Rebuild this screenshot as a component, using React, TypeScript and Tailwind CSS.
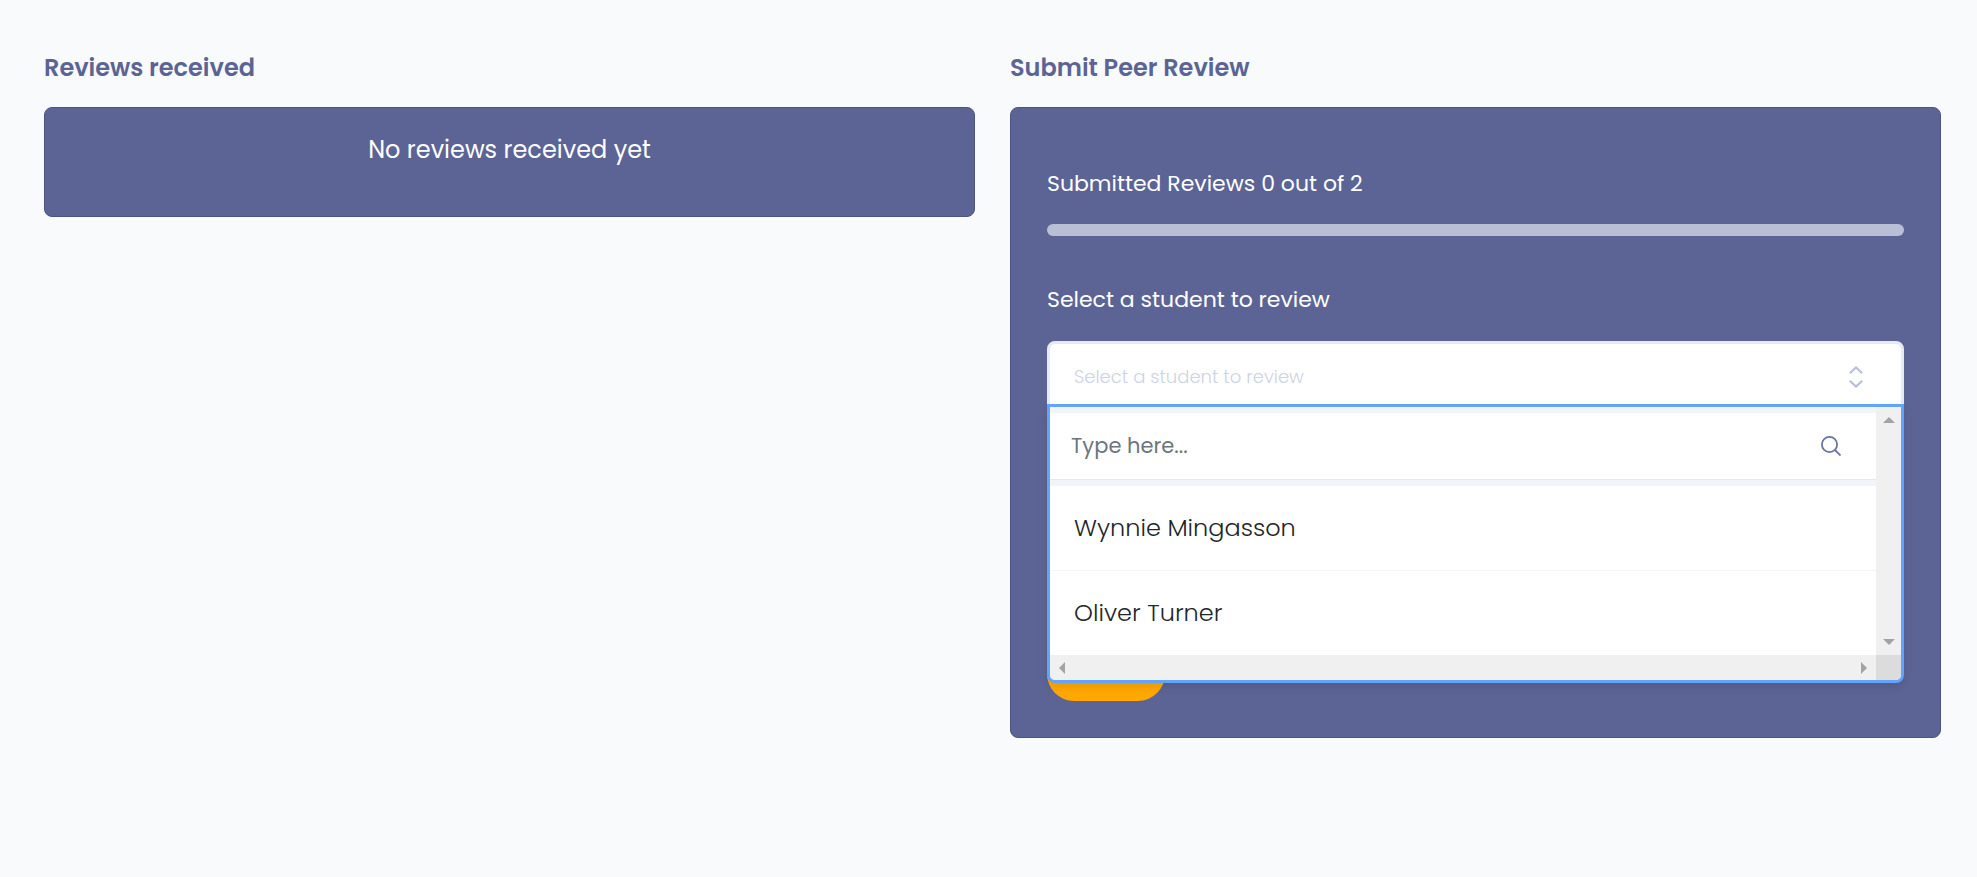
import { useState } from "react";

const students = ["Wynnie Mingasson", "Oliver Turner"];

function Arrow({ points, className }: { points: string; className: string }) {
  return (
    <svg className={className} fill="#a3a3a3" aria-hidden="true">
      <polygon points={points} />
    </svg>
  );
}

function StudentMenu({ onPick }: { onPick: (name: string) => void }) {
  const [query, setQuery] = useState("");
  const shown = students.filter((s) => s.toLowerCase().includes(query.toLowerCase()));

  return (
    <div className="absolute inset-x-0 top-[63px] z-10 grid grid-cols-[1fr_25px] overflow-hidden rounded-b-lg border-3 border-[#61a4fc] bg-white shadow-[0_4px_10px_rgba(0,0,0,0.1)]">
      <div className="min-w-0">
        <div className="border-y-6 border-[#f1f4f9]">
          <div className="flex h-[67px] items-center border-b border-[#e6e9f0] pr-[35px] pl-[21px]">
            <input
              type="text"
              aria-label="Search students"
              placeholder="Type here..."
              value={query}
              onChange={(e) => setQuery(e.target.value)}
              className="min-w-0 flex-1 bg-transparent text-[21px] text-gray-700 outline-none placeholder:text-[#6c757d]"
            />
            <svg viewBox="0 0 20 20" className="size-5" fill="none" stroke="#6b74a3" strokeWidth="1.8" aria-hidden="true">
              <circle cx="8.5" cy="8.5" r="7.6" />
              <path d="M14 14l5.5 5.5" />
            </svg>
          </div>
        </div>
        <ul role="listbox" aria-label="Students" className="divide-y divide-[#f3f4f7]">
          {shown.map((name) => (
            <li key={name} role="option" aria-selected="false">
              <button
                type="button"
                onClick={() => onPick(name)}
                className="flex h-[84px] w-full items-center px-6 text-left text-2xl font-light text-[#212529]"
              >
                {name}
              </button>
            </li>
          ))}
        </ul>
      </div>
      <div className="flex flex-col items-center justify-between bg-[#f0f0f0] py-[10px]">
        <Arrow className="h-[6px] w-[12px]" points="6,0 12,6 0,6" />
        <Arrow className="h-[6px] w-[12px]" points="0,0 12,0 6,6" />
      </div>
      <div className="flex h-[25px] items-center justify-between bg-[#f0f0f0] px-[9px]">
        <Arrow className="h-[12px] w-[6px]" points="6,0 6,12 0,6" />
        <Arrow className="h-[12px] w-[6px]" points="0,0 6,6 0,12" />
      </div>
      <div className="bg-[#dcdcdc]" />
    </div>
  );
}

function StudentSelect() {
  const [open, setOpen] = useState(true);
  const [picked, setPicked] = useState("");

  return (
    <div className="relative">
      <button
        id="student"
        type="button"
        aria-haspopup="listbox"
        aria-expanded={open}
        onClick={() => setOpen(!open)}
        className="flex h-[72px] w-full items-center justify-between rounded-lg border-3 border-[#e6eaf2] bg-white pr-[38px] pl-6 text-left"
      >
        <span className="text-lg font-light text-[#cdd2e6]">{picked || "Select a student to review"}</span>
        <svg viewBox="0 0 14 22" className="h-[22px] w-[14px]" fill="none" stroke="#b9bfd8" strokeWidth="2.2" aria-hidden="true">
          <path d="M0.8 7.2L7 1.4l6.200 5.800M0.800 14.800L7 20.600l6.200-5.800" />
        </svg>
      </button>
      {open && (
        <StudentMenu
          onPick={(name) => {
            setPicked(name);
            setOpen(false);
          }}
        />
      )}
    </div>
  );
}

export default function App() {
  return (
    <main className="grid min-h-screen grid-cols-2 items-start gap-[35px] bg-[#f8fafc] pt-[50px] pr-9 pb-12 pl-11 font-['Poppins','Inter',sans-serif] text-white">
      <section>
        <h2 className="mb-[21px] text-2xl leading-9 font-semibold text-[#5b6495]">Reviews received</h2>
        <div className="rounded-lg border border-[#4c557f] bg-[#5b6495] px-9 pt-6 pb-12">
          <p className="text-center text-2xl leading-9">No reviews received yet</p>
        </div>
      </section>
      <section>
        <h2 className="mb-[21px] text-2xl leading-9 font-semibold text-[#5b6495]">Submit Peer Review</h2>
        <form
          onSubmit={(e) => e.preventDefault()}
          className="flex flex-col rounded-lg border border-[#4c557f] bg-[#5b6495] px-9 pt-[60px] pb-9"
        >
          <p id="progress-label" className="text-[22px] leading-8">Submitted Reviews 0 out of 2</p>
          <div
            role="progressbar"
            aria-labelledby="progress-label"
            aria-valuenow={0}
            aria-valuemin={0}
            aria-valuemax={2}
            className="mt-6 h-3 rounded-full bg-[#b9bfd4]"
          />
          <label htmlFor="student" className="mt-12 mb-[25px] text-[22px] leading-8">
            Select a student to review
          </label>
          <StudentSelect />
          <button type="submit" aria-label="Submit review" className="mt-[234px] h-[54px] w-[118px] rounded-full bg-[#ffa800]" />
        </form>
      </section>
    </main>
  );
}
